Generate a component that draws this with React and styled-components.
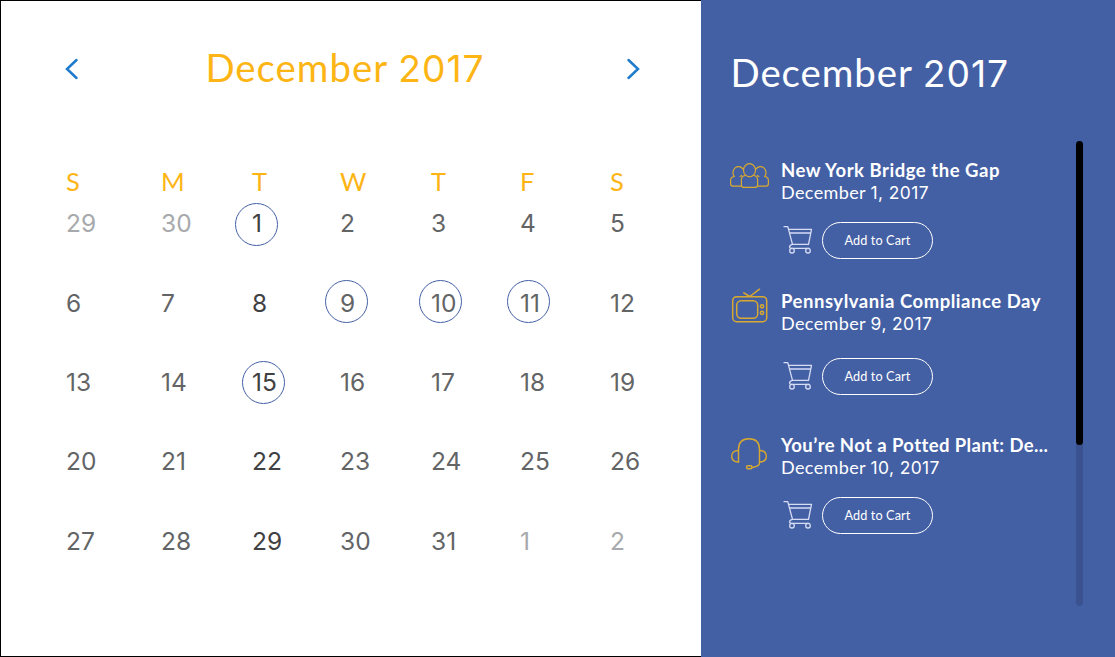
import React from 'react';
import styled, { createGlobalStyle } from 'styled-components';

const GlobalStyle = createGlobalStyle`
  * { box-sizing: border-box; }
  html, body { margin: 0; padding: 0; overflow: hidden; background: #fff; }
  body { font-family: Lato, "Open Sans", sans-serif; }
  h1, h2, h3, p { margin: 0; font-weight: 400; white-space: nowrap; }
`;

const Page = styled.main`
  display: grid;
  grid-template-columns: 701px 1fr;
  width: 1115px;
  height: 657px;
`;

const Calendar = styled.section`
  border: 1px solid #000;
  border-right: 0;
  background: #fff;
`;

const MonthBar = styled.header`
  display: flex;
  align-items: center;
  justify-content: space-between;
  height: 48px;
  margin-top: 44px;
  padding: 0 59.5px 0 61.5px;
`;

const MonthTitle = styled.h1`
  margin-right: 14px;
  padding-bottom: 3px;
  color: #fdb515;
  font-size: 38.4px;
  line-height: 45px;
  letter-spacing: 1px;
`;

const Digits = styled.span`
  font-family: Inter, sans-serif;
  font-size: 0.97em;
`;

const ArrowButton = styled.button`
  display: flex;
  padding: 0;
  border: 0;
  background: none;
`;

const Week = styled.div`
  display: grid;
  grid-template-columns: 95px 91px 88px 91px 89px 90px 60px;
  align-items: center;
  height: ${(p) => p.$height || 30}px;
  padding-left: 65px;
`;

const Weekdays = styled(Week)`
  margin-top: 73px;
  color: #fdb515;
  font-size: 25.5px;
`;

const Weeks = styled.div`
  display: grid;
  grid-auto-rows: 79.4px;
  margin-top: -12.4px;
`;

const tones = { muted: '#a7a9ac', normal: '#636466', strong: '#414042' };

const Day = styled.span`
  position: relative;
  font-family: Inter, sans-serif;
  font-size: 24.5px;
  line-height: 30px;
  color: ${(p) => tones[p.$tone]};
`;

const Ring = styled.i`
  position: absolute;
  left: ${(p) => p.$left}px;
  top: ${(p) => p.$top}px;
  width: 43px;
  height: 43px;
  border: 1px solid #4460a5;
  border-radius: 50%;
`;

const Sidebar = styled.aside`
  display: grid;
  grid-template-columns: 1fr 7px;
  grid-template-rows: 141px 465px;
  padding: 0 32px 0 29px;
  background: #4460a5;
  color: #fff;
`;

const SidebarTitle = styled.h2`
  grid-column: 1 / -1;
  padding: 48px 0 0 0.5px;
  font-size: 38.4px;
  line-height: 48px;
  letter-spacing: 0.95px;
`;

const EventList = styled.div`
  display: flex;
  flex-direction: column;
  padding-top: 18px;
`;

const Event = styled.article`
  display: grid;
  grid-template-columns: 51px 1fr;
  height: ${(p) => p.$height}px;
`;

const EventIcon = styled.div`
  margin-top: ${(p) => p.$top}px;
  svg { display: block; }
`;

const EventTitle = styled.h3`
  font-size: 18.5px;
  font-weight: 700;
  line-height: 22px;
  letter-spacing: ${(p) => p.$spacing}px;
`;

const EventDate = styled.p`
  font-size: 18px;
  line-height: 23px;
  letter-spacing: 0.38px;
`;

const Actions = styled.div`
  display: flex;
  gap: 9px;
  margin-top: ${(p) => p.$top}px;
  padding-left: 2px;
`;

const CartButton = styled.button`
  width: 111px;
  height: 37px;
  padding: 0;
  border: 1px solid #fff;
  border-radius: 19px;
  background: none;
  color: #fff;
  font: 400 12.7px/35px Lato, sans-serif;
  letter-spacing: 0.1px;
`;

const Track = styled.div`
  height: 465px;
  border-radius: 4px;
  background: #3a5290;
`;

const Thumb = styled.div`
  height: 304px;
  border-radius: 4px;
  background: #000;
`;

const Arrow = ({ d }) => (
  <ArrowButton>
    <svg width="16" height="24" viewBox="0 0 16 24" fill="none" stroke="#1f7bcb" strokeWidth="2.5" strokeLinecap="round">
      <path d={d} />
    </svg>
  </ArrowButton>
);

const iconProps = { fill: 'none', stroke: '#d9a92f', strokeLinecap: 'round', strokeLinejoin: 'round' };

const PeopleIcon = () => (
  <svg width="40" height="26" viewBox="0 0 40 26" {...iconProps} strokeWidth="1.2">
    <ellipse cx="19.5" cy="7.3" rx="6" ry="6.6" />
    <path d="M15.2 12.5c-2.4.4-3.8 1.8-3.8 4.2v5.2c0 1.7 1 2.5 2.7 2.5h10.8c1.7 0 2.7-.8 2.7-2.5v-5.2c0-2.4-1.4-3.8-3.8-4.2" />
    <path d="M4.2 13.5A5 5.5 0 1 1 12.9 5.9M11.6 12.3q-.7 1-1.7 1.2M34.8 13.5A5 5.5 0 1 0 26.1 5.9M27.4 12.3q.7 1 1.7 1.2" />
    <path d="M4.2 13.5c-2.2.5-3.6 1.7-3.6 3.7v3.6c0 1.5.8 2.3 2.3 2.3h8.4M34.8 13.5c2.2.5 3.6 1.7 3.6 3.7v3.6c0 1.5-.8 2.3-2.3 2.3h-8.4" />
  </svg>
);

const TvIcon = () => (
  <svg width="40" height="36" viewBox="0 0 40 36" {...iconProps} strokeWidth="1.5">
    <rect x="2.7" y="8.7" width="34" height="25" rx="4" />
    <rect x="6.7" y="12.7" width="21" height="17.5" rx="4.5" />
    <circle cx="32" cy="18.3" r="1.6" />
    <circle cx="32" cy="24.8" r="1.6" />
    <path d="M13.8 4.8l6 3.7L29.5 1.2" />
  </svg>
);

const HeadsetIcon = () => (
  <svg width="40" height="34" viewBox="0 0 40 34" {...iconProps} strokeWidth="1.4">
    <path d="M8.5 25V12.5C8.5 5.5 12.5 1.7 19 1.7S29.5 5.5 29.5 12.5V25" />
    <path d="M8.5 13.5C4.2 13.5 1.7 15.8 1.7 19.3S4.2 25 8.5 25M29.5 13.5c4.3 0 6.8 2.3 6.8 5.8S33.8 25 29.5 25" />
    <path d="M29.5 25v.8c0 2.5-1.5 3.4-7.5 4.7" />
    <rect x="16.5" y="28.8" width="5.5" height="3" rx="1.5" />
  </svg>
);

const CartIcon = () => (
  <svg width="30" height="34" viewBox="0 0 30 34" fill="none" stroke="#d5dcf3" strokeWidth="1.3" strokeLinejoin="round">
    <path d="M.5 4.7h4.3L9.5 22.4H25.5l3-15H5.7M6.600 11h21.2M9.5 22.4c-2 .6-3 1.5-3 2.5 0 .9.7 1.4 2 1.4h17.7" />
    <circle cx="9" cy="28.7" r="2.3" />
    <circle cx="25" cy="28.7" r="2.3" />
  </svg>
);

const weeks = [
  [29, 30, 1, 2, 3, 4, 5],
  [6, 7, 8, 9, 10, 11, 12],
  [13, 14, 15, 16, 17, 18, 19],
  [20, 21, 22, 23, 24, 25, 26],
  [27, 28, 29, 30, 31, 1, 2],
];

const rings = {
  '0-2': [-16.6, -5.2],
  '1-3': [-14.6, -7.5],
  '1-4': [-11.7, -7.5],
  '1-5': [-12.6, -7.5],
  '2-2': [-10.3, -6],
};

const toneOf = (w, d) => {
  if ((w === 0 && d < 2) || (w === 4 && d > 4)) return 'muted';
  return d === 2 ? 'strong' : 'normal';
};

const events = [
  { title: 'New York Bridge the Gap', day: 1, Icon: PeopleIcon, height: 131, iconTop: 4, actionsTop: 18, spacing: 0.53 },
  { title: 'Pennsylvania Compliance Day', day: 9, Icon: TvIcon, height: 144, iconTop: -2, actionsTop: 23, spacing: 0.53 },
  { title: 'You’re Not a Potted Plant: De...', day: 10, Icon: HeadsetIcon, height: 120, iconTop: 3, actionsTop: 18, spacing: 0.4 },
];

export default function App() {
  return (
    <>
      <GlobalStyle />
      <Page>
        <Calendar>
          <MonthBar>
            <Arrow d="M13.5 3L4 12l9.5 9" />
            <MonthTitle>December <Digits>2017</Digits></MonthTitle>
            <Arrow d="M2.5 3L12 12l-9.5 9" />
          </MonthBar>
          <Weekdays>
            {['S', 'M', 'T', 'W', 'T', 'F', 'S'].map((d, i) => <span key={i}>{d}</span>)}
          </Weekdays>
          <Weeks>
            {weeks.map((week, w) => (
              <Week key={w} $height={79.4}>
                {week.map((n, d) => {
                  const ring = rings[`${w}-${d}`];
                  return (
                    <Day key={d} $tone={toneOf(w, d)}>
                      {n}
                      {ring && <Ring $left={ring[0]} $top={ring[1]} />}
                    </Day>
                  );
                })}
              </Week>
            ))}
          </Weeks>
        </Calendar>
        <Sidebar>
          <SidebarTitle>December <Digits>2017</Digits></SidebarTitle>
          <EventList>
            {events.map(({ title, day, Icon, height, iconTop, actionsTop, spacing }) => (
              <Event key={title} $height={height}>
                <EventIcon $top={iconTop}><Icon /></EventIcon>
                <div>
                  <EventTitle $spacing={spacing}>{title}</EventTitle>
                  <EventDate>December <Digits>{day}, 2017</Digits></EventDate>
                  <Actions $top={actionsTop}>
                    <CartIcon />
                    <CartButton>Add to Cart</CartButton>
                  </Actions>
                </div>
              </Event>
            ))}
          </EventList>
          <Track><Thumb /></Track>
        </Sidebar>
      </Page>
    </>
  );
}
